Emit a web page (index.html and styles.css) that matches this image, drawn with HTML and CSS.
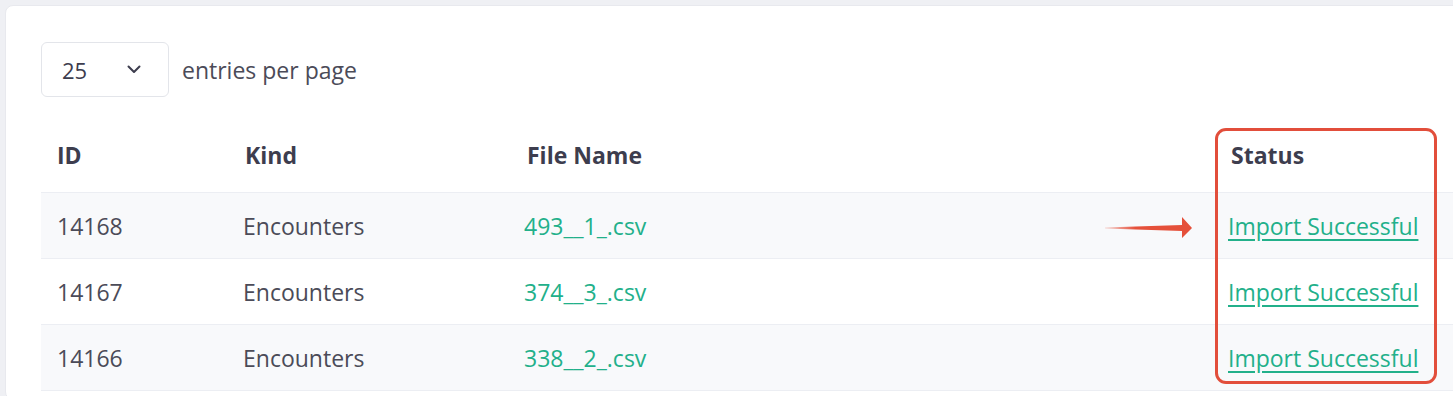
FILE: index.html
```html
<!DOCTYPE html>
<html lang="en">
<head>
  <meta charset="UTF-8">
  <title>Imports</title>
  <link rel="stylesheet" href="styles.css">
</head>
<body>
  <div class="card">
    <div class="toolbar">
      <div class="select">
        <span>25</span>
        <svg class="chevron" width="14" height="9" viewBox="0 0 14 9"><path d="M1.5 1.5 L7 7 L12.5 1.5" fill="none" stroke="#3d3d4e" stroke-width="2" stroke-linecap="round" stroke-linejoin="round"/></svg>
      </div>
      <span class="per-page">entries per page</span>
    </div>
    <table>
      <colgroup>
        <col class="c-id">
        <col class="c-kind">
        <col class="c-file">
        <col>
      </colgroup>
      <thead>
        <tr>
          <th>ID</th>
          <th>Kind</th>
          <th>File Name</th>
          <th>Status</th>
        </tr>
      </thead>
      <tbody>
        <tr>
          <td>14168</td>
          <td>Encounters</td>
          <td><a class="file">493__1_.csv</a></td>
          <td><a class="status">Import Successful</a></td>
        </tr>
        <tr>
          <td>14167</td>
          <td>Encounters</td>
          <td><a class="file">374__3_.csv</a></td>
          <td><a class="status">Import Successful</a></td>
        </tr>
        <tr>
          <td>14166</td>
          <td>Encounters</td>
          <td><a class="file">338__2_.csv</a></td>
          <td><a class="status">Import Successful</a></td>
        </tr>
      </tbody>
    </table>
    <!-- annotation overlay -->
    <svg class="arrow" width="96" height="30" viewBox="0 0 96 30">
      <defs>
        <linearGradient id="fade" x1="0" x2="1" y1="0" y2="0">
          <stop offset="0" stop-color="#e5503a" stop-opacity="0.2"/>
          <stop offset="0.35" stop-color="#e5503a" stop-opacity="1"/>
        </linearGradient>
      </defs>
      <polygon points="5,15.5 82,13 82,5 92,16 82,26 82,19 5,16.5" fill="url(#fade)"/>
    </svg>
    <div class="highlight"></div>
  </div>
</body>
</html>
```

FILE: styles.css
```css
html, body {
  height: 396px;
  overflow: hidden;
}
body {
  margin: 0;
  padding: 5px 0 0 5px;
  box-sizing: border-box;
  background: #eff0f4;
  font-family: 'Open Sans', 'Noto Sans', Arial, sans-serif;
  color: #4b4b58;
}
.card {
  position: relative;
  width: 1480px;
  height: 395px;
  background: #fff;
  border: 1px solid #e8e9ee;
  border-radius: 8px;
  box-sizing: border-box;
  padding: 36px 0 0 35px;
}
.toolbar {
  display: flex;
  align-items: center;
  gap: 13px;
}
.select {
  width: 128px;
  height: 55px;
  box-sizing: border-box;
  border: 1px solid #e3e5ea;
  border-radius: 6px;
  display: flex;
  align-items: center;
  justify-content: space-between;
  padding: 0 27px 0 20px;
  font-size: 22px;
  color: #3d3d4e;
}
.per-page {
  font-size: 23px;
  color: #4b4b58;
}
table {
  margin-top: 20px;
  width: 1412px;
  table-layout: fixed;
  border-collapse: collapse;
}
.c-id { width: 188px; }
.c-kind { width: 282px; }
.c-file { width: 704px; }
th, td {
  text-align: left;
  padding: 0 0 0 16px;
  font-size: 23px;
  white-space: nowrap;
}
th {
  height: 75px;
  font-weight: 700;
  color: #3d3d4e;
}
td {
  height: 65px;
  border-top: 1px solid #eceef3;
  color: #4b4b58;
}
td:nth-child(2) { padding-left: 14px; }
td:nth-child(3) { padding-left: 13px; }
td:nth-child(4) { padding-left: 13px; }
tbody tr:nth-child(odd) td {
  background: #f8f9fb;
}
tbody tr:last-child td {
  border-bottom: 1px solid #eceef3;
}
.file {
  color: #22b08a;
}
.status {
  color: #22b08a;
  text-decoration: underline;
  text-underline-offset: 4px;
}
.arrow {
  position: absolute;
  left: 1094px;
  top: 206px;
}
.highlight {
  position: absolute;
  left: 1209px;
  top: 122px;
  width: 222px;
  height: 256px;
  box-sizing: border-box;
  border: 3px solid #e24e3b;
  border-radius: 11px;
}
```
